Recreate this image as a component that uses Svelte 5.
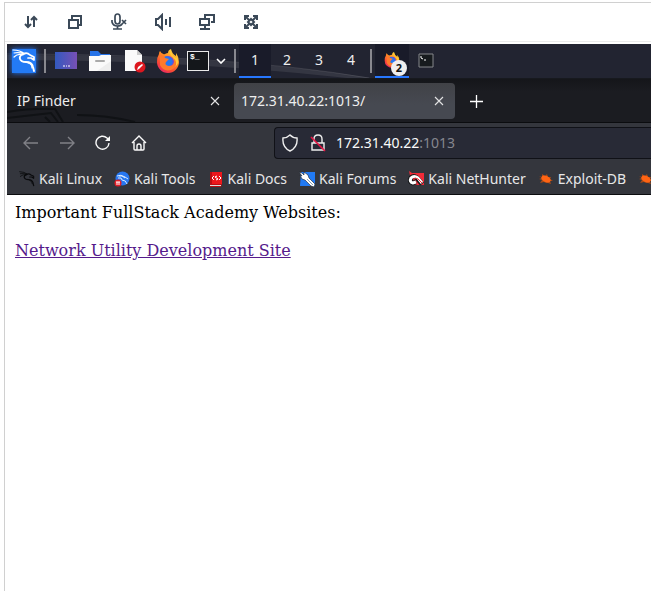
<script>
  const tools = ['transfer', 'copy', 'microphone', 'sound', 'displays', 'fullscreen'];
  const labels = {
    transfer: 'Transfer files', copy: 'Clipboard', microphone: 'Microphone',
    sound: 'Sound', displays: 'Displays', fullscreen: 'Full screen'
  };
  const workspaces = [1, 2, 3, 4];
  let workspace = $state(1);
  let address = $state('172.31.40.22:1013');
  const host = $derived(address.split(':')[0]);
  const port = $derived(address.slice(host.length));
  const bookmarks = [
    { name: 'Kali Linux', icon: 'dragon' },
    { name: 'Kali Tools', icon: 'tools' },
    { name: 'Kali Docs', icon: 'docs' },
    { name: 'Kali Forums', icon: 'forums' },
    { name: 'Kali NetHunter', icon: 'nethunter' },
    { name: 'Exploit-DB', icon: 'bug' }
  ];
</script>

{#snippet dragon(color, size)}
  <svg width={size} height={size} viewBox="0 0 24 24" fill="none" stroke={color} stroke-linecap="round" stroke-linejoin="round">
    <path d="M1 1Q8 1 13 5M2 4Q7 3 12 5M2 8Q6 4 11 6" stroke-width="1.200" />
    <path d="M11 5Q7 7 8 10Q9 13 14 13Q20 13 21 18L22 22" stroke-width="1.900" />
    <path d="M11 5Q15 3 18 6L22 8L22 11L19 9L16 9" stroke-width="1.700" />
    <path d="M16 14Q20 15 20 19" stroke-width="1.200" />
  </svg>
{/snippet}

{#snippet firefox(size)}
  <svg width={size} height={size} viewBox="0 0 24 24">
    <defs>
      <linearGradient id="flame" x1=".8" y1="0" x2=".2" y2="1">
        <stop offset="0" stop-color="#ffe53b" /><stop offset=".4" stop-color="#ff8b24" />
        <stop offset=".75" stop-color="#f94438" /><stop offset="1" stop-color="#e6266d" />
      </linearGradient>
    </defs>
    <path d="M3 5Q3 3 4 2Q6 6 9 5Q11 4 12 4Q12 1 15 0Q16 5 20 7L20 4Q23 8 23 13A11 11 0 0 1 1 13Q1 8 3 5Z" fill="url(#flame)" />
    <circle cx="12" cy="13" r="6" fill="#7446d8" />
    <path d="M8 8Q12 6 16 10Q18 16 13 17Q8 18 7 14L12 12Q8 11 8 8Z" fill="#2578ef" />
    <path d="M4 7Q8 5 9 9L13 10L10 13Q8 16 13 17Q19 17 18 10Q24 17 15 21Q7 23 4 16Z" fill="#ff7a2b" />
    <path d="M14 1Q13 5 17 8Q22 13 19 18Q24 14 21 8L20 9Q15 6 15 1Z" fill="#ffcb37" />
  </svg>
{/snippet}

{#snippet toolIcon(name)}
  <svg width="18" height="18" viewBox="0 0 18 18" fill="none" stroke="#3b4958" stroke-width="2">
    {#if name === 'transfer'}
      <path d="M6 3V14M3 11L6 14L9 11M12 14V4M9 7L12 4L15 7" />
    {:else if name === 'copy'}
      <path d="M3 7H12V15H3ZM6 6V3H15V12H13" />
    {:else if name === 'microphone'}
      <path d="M5 4Q5 1 7.500 1Q10 1 10 4V8Q10 11 7.500 11Q5 11 5 8ZM2 7V9Q3 13 7.500 13Q11 13 12 11M7.500 13V16M3 16H12M12 7L16 11M16 7L12 11" stroke-width="1.700" />
    {:else if name === 'sound'}
      <path d="M8 2V16L4 12H2V6H4Z" /><path d="M12 6V12M16 4V14" />
    {:else if name === 'displays'}
      <path d="M7 6V2H16V9H13M2 6H11V12H2ZM7 12V15M2 16H12" />
    {:else}
      <path d="M3 3L7 7M11 11L15 15M15 3L11 7M7 11L3 15M3 7V3H7M11 3H15V7M15 11V15H11M7 15H3V11M9 6L12 9L9 12L6 9Z" />
    {/if}
  </svg>
{/snippet}

{#snippet close()}
  <svg width="10" height="10" viewBox="0 0 10 10" stroke="#e4e4e5" stroke-width="1.100"><path d="M1 1L9 9M9 1L1 9" /></svg>
{/snippet}

{#snippet bookmarkIcon(name)}
  {#if name === 'dragon'}
    {@render dragon('#0a0b0d', 16)}
  {:else}
    <svg width="16" height="16" viewBox="0 0 16 16" fill="none">
      {#if name === 'tools'}
        <circle cx="8.500" cy="7.500" r="7" fill="#2677f1" />
        <path d="M3 5Q7 3 11 6L14 8M4 7Q8 6 8 9Q12 9 13 13M5 5Q8 4 11 7" stroke="#d9eaff" stroke-width="1" />
        <circle cx="4" cy="12" r="3.500" fill="#e21c26" />
        <path d="M2 11H6M3 11V14M5 11V14" stroke="#fff" />
      {:else if name === 'docs'}
        <path d="M2 1H14V13L13 16H2Z" fill="#b90d12" /><path d="M4 1H14V13H4Z" fill="#ed171c" />
        <path d="M2 14H13V15H2Z" fill="#ddd" />
        <path d="M6 5L4 7L6 9M11 5L13 7L11 9M9 5L7 6L10 8L8 9" stroke="#fff" />
      {:else if name === 'forums'}
        <path d="M2 1H16V15H1Z" fill="#217af4" />
        <path d="M0 1L3 2L5 4L5 1L9 4L10 7L16 13L15 16L12 15L6 9L3 8L1 4L3 5Z" fill="#fff" stroke="#18202b" stroke-width=".6" />
        <path d="M8 8L14 14" stroke="#8ba0b7" />
      {:else if name === 'nethunter'}
        <path d="M1 0L4 2H16V14H4Z" fill="#f22b38" />
        <path d="M14 13L9 7Q5 4 3 7Q1 11 5 12L8 11" stroke="#151719" stroke-width="5" />
        <path d="M14 12L10 7Q6 4 3 7Q1 11 5 12L8 11" stroke="#fff" stroke-width="3" />
        <path d="M14 12L10 8Q7 6 5 8" stroke="#f22b38" stroke-width="1" />
      {:else}
        <path d="M1 5L4 6L4 3L7 5L9 3L10 6L13 6L12 8L15 10L12 10L13 13L10 12L8 12L6 11L2 12L4 9L1 8L4 7Z" fill="#a84a17" />
        <ellipse cx="8" cy="8" rx="5" ry="3" transform="rotate(25 8 8)" fill="#ff6414" />
      {/if}
    </svg>
  {/if}
{/snippet}

<div class="viewer">
  <header class="tools">
    {#each tools as name}
      <button aria-label={labels[name]}>{@render toolIcon(name)}</button>
    {/each}
  </header>

  <main class="desktop">
    <nav class="panel" aria-label="Desktop panel">
      <svg class="streak" viewBox="0 0 380 34" preserveAspectRatio="none" aria-hidden="true">
        <path d="M0 11Q210 10 365 34H340Q180 16 0 16Z" fill="#8b8b91" opacity=".18" />
        <path d="M0 10Q220 10 362 34" fill="none" stroke="#9a9aa0" opacity=".2" />
      </svg>
      <button class="kali" aria-label="Applications">{@render dragon('#fff', 24)}</button>
      <span class="rule"></span>
      <button class="launcher" aria-label="Show desktop">
        <svg width="24" height="24" viewBox="0 0 24 24">
          <defs><linearGradient id="desk"><stop stop-color="#3259bf" /><stop offset="1" stop-color="#7850b5" /></linearGradient></defs>
          <path d="M1 3H23V20H1Z" fill="url(#desk)" /><path d="M9 17H11M12 17H13M14 17H16" stroke="#fff" />
        </svg>
      </button>
      <button class="launcher" aria-label="Files">
        <svg width="24" height="24" viewBox="0 0 24 24">
          <path d="M2 2H10L13 5H22V10H2Z" fill="#2673e8" /><path d="M1 7H11L13 6H23V22H1Z" fill="#fafafa" />
          <path d="M23 12V22H9Z" fill="#eee" /><path d="M8 12H16" stroke="#aaa" stroke-width="2" stroke-linecap="round" />
        </svg>
      </button>
      <button class="launcher" aria-label="Text editor">
        <svg width="24" height="24" viewBox="0 0 24 24">
          <path d="M3 1H15L20 6V22H3Z" fill="#fafafa" /><path d="M15 1V6H20Z" fill="#ccc" />
          <circle cx="18" cy="18" r="5.500" fill="#dd171f" /><path d="M15 21L16 18L20 15L21 16L17 20Z" fill="#fff" />
        </svg>
      </button>
      <button class="launcher" aria-label="Firefox">{@render firefox(24)}</button>
      <button class="terminal" aria-label="Terminal"><span>$_</span></button>
      <button class="chevron" aria-label="More terminals">
        <svg width="10" height="6" viewBox="0 0 10 6" fill="none" stroke="#fff" stroke-width="1.600"><path d="M1 1L5 5L9 1" /></svg>
      </button>
      <span class="rule"></span>
      <div class="workspaces">
        {#each workspaces as number}
          <button class:active={workspace === number} onclick={() => (workspace = number)}>{number}</button>
        {/each}
      </div>
      <span class="rule"></span>
      <button class="task" aria-label="Firefox windows">{@render firefox(16)}<span class="count">2</span></button>
      <button class="shell" aria-label="Terminal window">
        <svg width="16" height="16" viewBox="0 0 16 16" fill="none"><path d="M1 1H15V14H1Z" fill="#171b1e" stroke="#85878b" /><path d="M3 3V5L5 6M6 7H8" stroke="#fff" /></svg>
      </button>
    </nav>

    <div class="tabs">
      <svg class="wallpaper" width="140" height="22" viewBox="0 0 140 22" fill="none" aria-hidden="true">
        <path d="M0 12Q25 8 48 9L56 22M0 18L44 13L51 22M38 17L43 22M70 15Q100 15 128 22" stroke="#101215" stroke-width="2" />
      </svg>
      <div class="tab"><span>IP Finder</span><button aria-label="Close IP Finder">{@render close()}</button></div>
      <div class="tab current"><span>172.31.40.22:1013/</span><button aria-label="Close current tab">{@render close()}</button></div>
      <button class="new" aria-label="New tab"><svg width="13" height="13" viewBox="0 0 13 13" stroke="#fff" stroke-width="1.300"><path d="M6.500 0V13M0 6.500H13" /></svg></button>
    </div>

    <div class="navigation">
      <button class="dim" aria-label="Back"><svg width="16" height="16" viewBox="0 0 16 16"><path d="M15 8H1M7 2L1 8L7 14" /></svg></button>
      <button class="dim" aria-label="Forward"><svg width="16" height="16" viewBox="0 0 16 16"><path d="M1 8H15M9 2L15 8L9 14" /></svg></button>
      <button aria-label="Reload"><svg width="16" height="16" viewBox="0 0 16 16"><path d="M14 8A6.500 6.500 0 1 1 12 3L14 5" /><path d="M15 1V6H10Z" fill="currentColor" stroke="none" /></svg></button>
      <button aria-label="Home"><svg width="16" height="16" viewBox="0 0 16 16"><path d="M1 8L8 1L15 8M3 7V14Q3 15 4 15H12Q13 15 13 14V7M6 15V11Q6 9 8 9Q10 9 10 11V15" /></svg></button>
      <div class="url">
        <svg width="16" height="18" viewBox="0 0 16 18"><path d="M8 1Q11 4 15 4Q16 13 8 17Q0 13 1 4Q5 4 8 1Z" /></svg>
        <svg width="16" height="18" viewBox="0 0 16 18"><path d="M2 9H14V16H2ZM4 9V5Q4 1 8 1Q12 1 12 5V9" /><path d="M1 3L15 17" class="slash" /></svg>
        <div class="address">
          <span aria-hidden="true">{host}<i>{port}</i></span>
          <input aria-label="Address" bind:value={address} spellcheck="false" />
        </div>
      </div>
    </div>

    <nav class="bookmarks" aria-label="Bookmarks">
      {#each bookmarks as bookmark}
        <a href="#top">{@render bookmarkIcon(bookmark.icon)}<span>{bookmark.name}</span></a>
      {/each}
      <a href="#top" aria-label="More bookmarks">{@render bookmarkIcon('bug')}</a>
    </nav>

    <article>
      <p>Important FullStack Academy Websites:</p>
      <p><a href="#top">Network Utility Development Site</a></p>
    </article>
  </main>
</div>

<style>
  :global(body) { background: #fff; overflow: hidden; }
  * { box-sizing: border-box; }
  button { padding: 0; border: 0; background: none; color: inherit; font: inherit; display: flex; align-items: center; justify-content: center; flex: none; }
  svg { display: block; flex: none; }
  .viewer { margin: 2px 0 0 4px; border: solid #d0d0d0; border-width: 1px 0 0 1px; min-height: calc(100vh - 2px); }
  .tools { display: flex; height: 39px; padding-left: 4px; border-bottom: 1px solid #ebebeb; }
  .tools button { width: 44px; }
  .desktop { margin: 2px 0 0 2px; font-family: "Noto Sans", sans-serif; color: #eee; }
  .panel { display: flex; align-items: center; height: 35px; background: #222431; position: relative; border-bottom: 1px solid #17191e; }
  .panel > * { position: relative; }
  .panel .streak { position: absolute; left: 0; top: 0; width: 380px; height: 34px; }
  .kali { width: 24px; height: 24px; margin: 0 8px 0 5px; background: #237af5; box-shadow: 0 0 5px #247bff; }
  .rule { width: 2px; height: 24px; background: #88888f; flex: none; }
  .launcher { width: 34px; height: 34px; }
  .rule + .launcher { margin-left: 3px; }
  .terminal { width: 22px; height: 20px; margin: 0 7px 0 2px; border: 1px solid #e9e9e9; background: #14171b; align-items: flex-start; justify-content: flex-start; font: bold 8px/10px "Liberation Mono", monospace; padding-left: 2px; color: #fff; }
  .chevron { width: 10px; height: 24px; margin-right: 8px; }
  .workspaces { display: flex; align-self: stretch; margin: 0 3px; }
  .workspaces button { width: 32px; font-size: 14px; line-height: 20px; border-bottom: 2px solid transparent; }
  .workspaces .active { background: #191b29; border-color: #2777ff; }
  .task { width: 34px; align-self: stretch; margin-left: 3px; background: #191b29; border-bottom: 2px solid #2777ff; }
  .count { position: absolute; left: 16px; top: 16px; width: 16px; height: 16px; border-radius: 50%; background: #eee; color: #111; font-weight: bold; font-size: 11px; line-height: 16px; }
  .shell { width: 34px; height: 34px; }
  .tabs { display: flex; align-items: center; height: 44px; padding-top: 1px; background: linear-gradient(#15161a, #1b1c21 30%); border-bottom: 1px solid #0b0c0f; position: relative; }
  .wallpaper { position: absolute; left: 0; bottom: 0; }
  .tab { position: relative; display: flex; align-items: center; justify-content: space-between; width: 221px; height: 36px; margin-left: 3px; padding: 0 8px 0 7px; border-radius: 4px; font-size: 14px; line-height: 20px; }
  .current { background: linear-gradient(#414247, #464951 60%); }
  .tab button { width: 16px; height: 20px; }
  .new { width: 36px; height: 36px; margin-left: 3px; }
  .navigation { display: flex; align-items: center; height: 40px; padding-left: 6px; background: #34363d; }
  .navigation svg { fill: none; stroke: currentColor; stroke-width: 1.4; }
  .navigation button { width: 36px; height: 32px; color: #fafafa; }
  .navigation .dim { color: #808187; }
  .url { display: flex; align-items: center; flex: 1; min-width: 0; height: 32px; margin-left: 117px; padding-left: 7px; gap: 12px; border: 1px solid #101117; border-right: 0; border-radius: 4px 0 0 4px; background: #282a36; }
  .url .slash { stroke: #e91545; stroke-width: 1.6; }
  .address { position: relative; flex: 1; margin-left: -2px; font-size: 14px; line-height: 20px; color: #fafafa; }
  .address i { color: #85868e; font-style: normal; }
  .address input { position: absolute; inset: 0; width: 100%; padding: 0; border: 0; outline: 0; background: none; color: transparent; caret-color: #fff; font: inherit; }
  .bookmarks { display: flex; align-items: center; gap: 12px; height: 32px; padding-left: 12px; background: #34363d; border-bottom: 1px solid #0b0c0f; overflow: hidden; }
  .bookmarks a { display: flex; align-items: center; gap: 4px; flex: none; color: #e7e7e8; text-decoration: none; white-space: nowrap; font-size: 14px; line-height: 20px; }
  article { padding: 8px; color: #000; font: 16px/19px "DejaVu Serif", serif; }
  article p { margin: 0 0 19px; }
  article a { color: #551a8b; }
</style>
